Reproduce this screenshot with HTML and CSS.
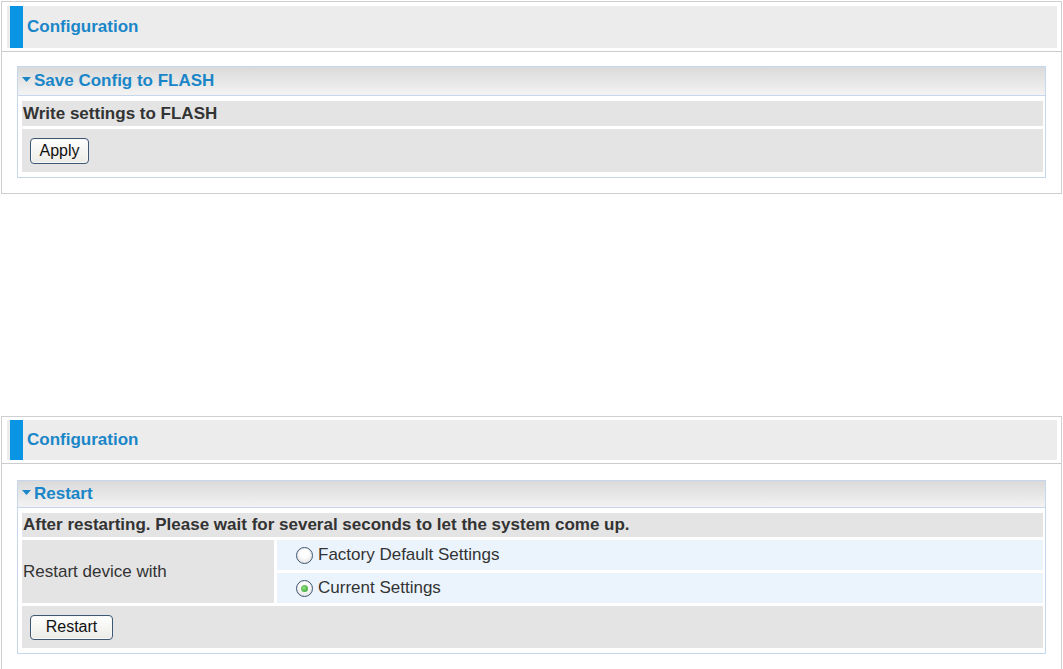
FILE: index.html
```html
<!DOCTYPE html>
<html>
<head>
<meta charset="utf-8">
<link rel="stylesheet" href="styles.css">
</head>
<body>
<div class="panel panel-first">
  <div class="panel-head">
    <div class="title-bar"><span class="title-mark"></span><span class="title-text">Configuration</span></div>
  </div>
  <div class="panel-body">
    <div class="section">
      <div class="section-head"><svg class="caret" width="9" height="5" viewBox="0 0 9 5"><path d="M0 0H9L4.5 5Z" fill="#1a86c8"/></svg><span>Save Config to FLASH</span></div>
      <div class="section-content">
        <div class="row row-info">Write settings to FLASH</div>
        <div class="row row-btn"><button class="btn btn-apply">Apply</button></div>
      </div>
    </div>
  </div>
</div>

<div class="panel panel-second">
  <div class="panel-head">
    <div class="title-bar"><span class="title-mark"></span><span class="title-text">Configuration</span></div>
  </div>
  <div class="panel-body">
    <div class="section">
      <div class="section-head"><svg class="caret" width="9" height="5" viewBox="0 0 9 5"><path d="M0 0H9L4.5 5Z" fill="#1a86c8"/></svg><span>Restart</span></div>
      <div class="section-content">
        <div class="row row-info">After restarting. Please wait for several seconds to let the system come up.</div>
        <div class="form-grid">
          <div class="label-cell">Restart device with</div>
          <div class="options">
            <div class="option"><span class="radio"></span><span>Factory Default Settings</span></div>
            <div class="option"><span class="radio radio-on"></span><span>Current Settings</span></div>
          </div>
        </div>
        <div class="row row-btn"><button class="btn btn-restart">Restart</button></div>
      </div>
    </div>
  </div>
</div>
</body>
</html>
```
FILE: styles.css
```css
* { box-sizing: border-box; }
html, body { margin: 0; padding: 0; background: #ffffff; }
body {
  font-family: "Liberation Sans", Arial, sans-serif;
  font-size: 17px;
  color: #333333;
}
.panel {
  margin: 1px 0 0 1px;
  width: 1061px;
  border: 1px solid #cfcfcf;
  background: #ffffff;
}
.panel-second { margin-top: 222px; }
.panel-head {
  padding: 4px 4px 3px 5px;
  border-bottom: 1px solid #cccccc;
}
.title-bar {
  height: 42px;
  background: #ececec;
  display: flex;
  align-items: stretch;
  padding-left: 3px;
}
.title-mark {
  width: 13px;
  background: #0995e3;
}
.title-text {
  display: flex;
  align-items: center;
  padding-left: 4px;
  font-weight: bold;
  color: #1a86c8;
  font-size: 17px;
  padding-bottom: 1px;
}
.panel-body { padding: 14px 15px 15px 15px; }
.section { border: 1px solid #c6d6ec; }
.section-head {
  height: 29px;
  border-bottom: 1px solid #c6d6ec;
  background: linear-gradient(#dadada, #f3f3f3);
  display: flex;
  align-items: center;
  padding-left: 4px;
  font-weight: bold;
  color: #1a86c8;
}
.caret { margin-right: 3px; margin-top: -3px; }
.section-content {
  padding: 5px 2px 5px 4px;
  display: flex;
  flex-direction: column;
  gap: 3px;
}
.row {
  background: #e4e4e4;
  display: flex;
  align-items: center;
}
.row-info {
  height: 25px;
  padding-left: 1px;
  font-weight: bold;
  color: #333333;
}
.row-btn {
  height: 43px;
  padding-left: 8px;
}
.panel-second .panel-head { padding-top: 3px; }
.panel-second .title-bar { height: 40px; }
.panel-second .panel-body { padding-top: 16px; }
.panel-second .section-head { height: 27px; }
.panel-second .row-info { height: 24px; }
.panel-second .row-btn { height: 42px; }
.btn {
  font-family: "Liberation Sans", Arial, sans-serif;
  font-size: 16px;
  color: #111111;
  height: 26px;
  border: 1px solid #3d5875;
  border-radius: 4px;
  background: linear-gradient(#ffffff, #ebebe6);
  padding: 0;
  box-shadow: inset 0 0 0 1px #f8f8f8;
}
.btn-apply { width: 59px; }
.btn-restart { width: 83px; height: 25px; }
.form-grid {
  display: grid;
  grid-template-columns: 252px 1fr;
  column-gap: 3px;
}
.label-cell {
  background: #e4e4e4;
  display: flex;
  align-items: center;
  padding-left: 1px;
}
.options {
  display: flex;
  flex-direction: column;
  gap: 3px;
}
.option {
  height: 30px;
  background: #ebf4fd;
  display: flex;
  align-items: center;
  padding-left: 19px;
  gap: 5px;
}
.radio {
  width: 17px;
  height: 17px;
  border-radius: 50%;
  border: 1px solid #3c5572;
  background: radial-gradient(circle at 50% 40%, #ffffff 30%, #d8d8d8 100%);
  display: flex;
  align-items: center;
  justify-content: center;
}
.radio-on::after {
  content: "";
  width: 7px;
  height: 7px;
  border-radius: 50%;
  background: radial-gradient(circle at 40% 40%, #8fe07f, #2c9a2a);
}
```
